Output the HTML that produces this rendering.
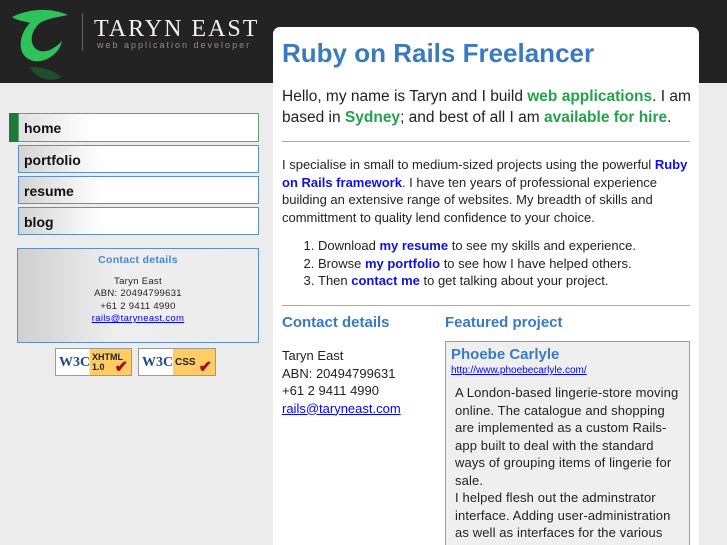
<!DOCTYPE html>
<html><head><meta charset="utf-8"><style>
*{margin:0;padding:0;box-sizing:border-box}
html,body{width:727px;height:545px;overflow:hidden}
body{background:#ececec;font-family:"Liberation Sans",sans-serif;color:#222;position:relative}
.hdr{position:absolute;left:0;top:0;width:727px;height:83px;background:#232323}
.abs{position:absolute}
.nav{position:absolute;left:18px;width:241px;height:28px;background:linear-gradient(90deg,#d4d4d4,#fff 35%);border:1px solid #5b8fc7;font-weight:bold;font-size:14px;padding:6px 5px;color:#111}
.main{position:absolute;left:273px;top:27px;width:426px;height:518px;overflow:hidden;background:#fff;border-radius:7px 7px 0 0;padding:0 9px}
a{color:#00f}
.g{color:#22a34a;font-weight:bold}
.b{color:#1010e0;font-weight:bold;text-decoration:none}
h1{color:#3a7bbf;font-size:26px;position:absolute;left:9px;top:11px;white-space:nowrap}
h2{color:#3a7bbf;font-size:15px;font-weight:bold}
p,li{font-size:13px;line-height:17.5px}
hr{border:0;border-top:1px solid #aaa;position:absolute;left:9px;width:408px}
</style></head><body>
<div class="hdr"></div>
<svg class="abs" style="left:10px;top:5px" width="62" height="90" viewBox="0 0 62 90">
<path d="M2 12 C18 4 40 2 58 10 C48 12 36 14 30 18 C20 26 18 42 30 46 C38 48 46 42 52 36 C50 48 36 58 24 56 C6 52 8 30 20 18 C14 16 8 16 2 12Z" fill="#2fc15a"/>
<path d="M20 62 C26 74 40 78 52 72 C44 66 34 62 20 62Z" fill="#1a5a2c" opacity=".8"/>
</svg>
<div class="abs" style="left:82px;top:13px;width:1px;height:38px;background:#666"></div>
<div class="abs" style="left:94px;top:16px;color:#f2f2f2;font-family:'Liberation Serif',serif;font-size:24px;letter-spacing:2px;white-space:nowrap">TARYN EAST</div>
<div class="abs" style="left:97px;top:40px;color:#a08870;font-size:9px;letter-spacing:2px;white-space:nowrap">web application developer</div>
<div class="abs" style="left:9px;top:113px;width:9px;height:29px;background:#1e7a3a"></div>
<div class="nav" style="top:113px;border-color:#5aa870;height:29px;background:linear-gradient(90deg,#e0e0e0,#fff 30%)">home</div>
<div class="nav" style="top:145px">portfolio</div>
<div class="nav" style="top:176px">resume</div>
<div class="nav" style="top:207px">blog</div>
<div class="abs" style="left:17px;top:248px;width:242px;height:95px;border:1px solid #5b8fc7;background:linear-gradient(90deg,#cfcfcf,#eee 40%,#ececec);text-align:center;font-size:9.5px;line-height:12.5px;letter-spacing:.3px">
<div style="color:#4a86c5;font-weight:bold;font-size:10.5px;margin-top:5px">Contact details</div>
<div style="margin-top:9px">Taryn East<br>ABN: 20494799631<br>+61 2 9411 4990<br><a href="#">rails@taryneast.com</a></div></div>
<div class="abs" style="left:55px;top:348px;width:77px;height:28px;border:1px solid #999;background:linear-gradient(90deg,#fff 45%,#fc6 45%);font-size:9px;font-weight:bold"><span style="position:absolute;left:3px;top:6px;color:#1a4a8c;font-size:14px;font-family:'Liberation Serif',serif">W3C</span><span style="position:absolute;left:36px;top:3px;line-height:10px">XHTML<br>1.0</span><span style="position:absolute;right:3px;top:8px;color:#a01010;font-size:16px">✔</span></div>
<div class="abs" style="left:138px;top:348px;width:78px;height:28px;border:1px solid #999;background:linear-gradient(90deg,#fff 45%,#fc6 45%);font-size:10px;font-weight:bold"><span style="position:absolute;left:3px;top:6px;color:#1a4a8c;font-size:14px;font-family:'Liberation Serif',serif">W3C</span><span style="position:absolute;left:36px;top:8px">CSS</span><span style="position:absolute;right:3px;top:8px;color:#a01010;font-size:16px">✔</span></div>
<div class="main">
<h1>Ruby on Rails Freelancer</h1>
<p class="abs" style="left:9px;top:59px;width:410px;font-size:15.5px;line-height:21px">Hello, my name is Taryn and I build <span class="g">web applications</span>. I am based in <span class="g">Sydney</span>; and best of all I am <span class="g">available for hire</span>.</p>
<hr style="top:114px">
<p class="abs" style="left:9px;top:129px;width:410px">I specialise in small to medium-sized projects using the powerful <a class="b" href="#">Ruby on Rails framework</a>. I have ten years of professional experience building an extensive range of websites. My breadth of skills and committment to quality lend confidence to your choice.</p>
<ol class="abs" style="left:45px;top:210px;width:380px">
<li>Download <a class="b" href="#">my resume</a> to see my skills and experience.</li>
<li>Browse <a class="b" href="#">my portfolio</a> to see how I have helped others.</li>
<li>Then <a class="b" href="#">contact me</a> to get talking about your project.</li></ol>
<hr style="top:278px">
<h2 class="abs" style="left:9px;top:287px">Contact details</h2>
<p class="abs" style="left:9px;top:320px">Taryn East<br>ABN: 20494799631<br>+61 2 9411 4990<br><a href="#">rails@taryneast.com</a></p>
<h2 class="abs" style="left:172px;top:287px">Featured project</h2>
<div class="abs" style="left:172px;top:314px;width:245px;height:220px;border:1px solid #7aa3cf;background:#efefef;padding:4px 5px">
<div style="color:#3a7bbf;font-size:15px;font-weight:bold">Phoebe Carlyle</div>
<a href="#" style="font-size:10px;display:block;margin-top:2px">http://www.phoebecarlyle.com/</a>
<p style="margin:8px 0 0 4px;letter-spacing:.12px">A London-based lingerie-store moving online. The catalogue and shopping are implemented as a custom Rails-app built to deal with the standard ways of grouping items of lingerie for sale.<br>I helped flesh out the adminstrator interface. Adding user-administration as well as interfaces for the various</p>
</div>
</div>
</body></html>
